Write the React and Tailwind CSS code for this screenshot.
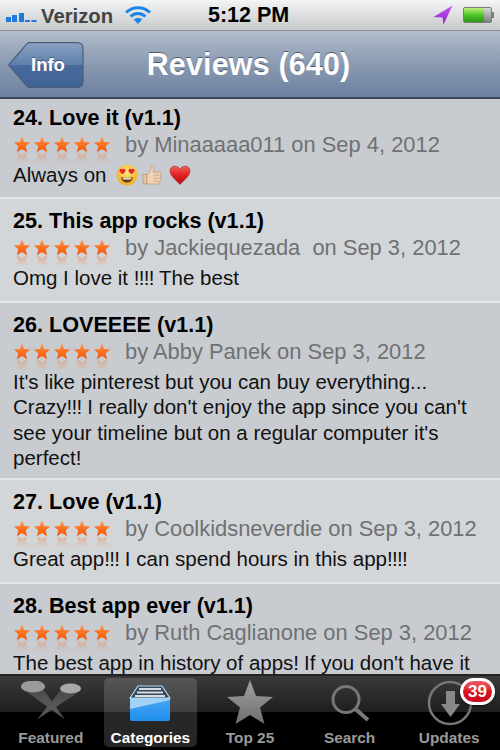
import React from 'react'

const reviews = [
  { title: '24. Love it (v1.1)', by: 'by Minaaaaa011 on Sep 4, 2012', body: ['Always on'], emoji: true, pad: 'pt-[5px] pb-[9.7px]' },
  { title: '25. This app rocks (v1.1)', by: 'by Jackiequezada  on Sep 3, 2012', body: ['Omg I love it !!!! The best'], pad: 'pt-[8px] pb-[10.7px]' },
  {
    title: '26. LOVEEEE (v1.1)',
    by: 'by Abby Panek on Sep 3, 2012',
    body: [
      "It's like pinterest but you can buy everything...",
      "Crazy!!! I really don't enjoy the app since you can't",
      "see your timeline but on a regular computer it's",
      'perfect!',
    ],
    pad: 'pt-[8px] pb-[7.8px]',
  },
  { title: '27. Love (v1.1)', by: 'by Coolkidsneverdie on Sep 3, 2012', body: ['Great app!!! I can spend hours in this app!!!!'], pad: 'pt-[8px] pb-[10.7px]' },
  { title: '28. Best app ever (v1.1)', by: 'by Ruth Caglianone on Sep 3, 2012', body: ["The best app in history of apps! If you don't have it"], pad: 'pt-[8px]' },
]

const STAR = 'M10 1 L12.6 7.4 L19.5 7.9 L14.2 12.3 L15.9 19 L10 15.4 L4.1 19 L5.8 12.3 L0.5 7.9 L7.4 7.4 Z'

function Star() {
  return (
    <svg width="20" height="28" viewBox="0 0 20 28" className="block">
      <defs>
        <linearGradient id="starFill" x1="0" y1="0" x2="0" y2="1">
          <stop offset="0" stopColor="#fb9a55" />
          <stop offset="0.55" stopColor="#f9701f" />
          <stop offset="1" stopColor="#f0560e" />
        </linearGradient>
        <linearGradient id="starGlow" x1="0" y1="0" x2="0" y2="1">
          <stop offset="0.3" stopColor="#ee8a55" stopOpacity="0" />
          <stop offset="1" stopColor="#ee8a55" stopOpacity="0.55" />
        </linearGradient>
      </defs>
      <path d={STAR} transform="translate(0.3 34) scale(0.88 -0.88)" fill="url(#starGlow)" />
      <path d={STAR} transform="translate(0.3 0.5) scale(0.88)" fill="url(#starFill)" />
    </svg>
  )
}

function Stars() {
  return (
    <div className="flex gap-[0.3px] h-[28px] w-[100px] shrink-0 mt-[4px]">
      {[1, 2, 3, 4, 5].map(i => <Star key={i} />)}
    </div>
  )
}

function Emojis() {
  return (
    <span className="inline-flex items-center ml-[10px]">
      {/* heart eyes */}
      <svg width="22" height="22" viewBox="0 0 22 22">
        <defs>
          <radialGradient id="face" cx="0.5" cy="0.35" r="0.7">
            <stop offset="0" stopColor="#ffe67a" />
            <stop offset="1" stopColor="#eda81c" />
          </radialGradient>
        </defs>
        <circle cx="11" cy="11" r="10.5" fill="url(#face)" />
        <path d="M6.5 5.5c-1-1.4-3.2-.6-3 1.2.1 1.4 1.7 2.4 3 3.4 1.3-1 2.9-2 3-3.4.2-1.8-2-2.6-3-1.2z" fill="#e3262b" />
        <path d="M15.5 5.5c-1-1.4-3.2-.6-3 1.2.1 1.4 1.7 2.4 3 3.4 1.3-1 2.9-2 3-3.4.2-1.8-2-2.6-3-1.2z" fill="#e3262b" />
        <path d="M5 13c3.5 1.2 8.5 1.2 12 0-.5 3.6-3 5.6-6 5.6S5.5 16.6 5 13z" fill="#6b3a10" />
        <path d="M6.5 13.8c3 .7 6 .7 9 0l-.4 1.4c-2.7.5-5.5.5-8.2 0z" fill="#fff" />
      </svg>
      {/* thumbs up */}
      <svg width="20" height="22" viewBox="0 0 20 22" className="ml-[4px]">
        <path d="M1 10.500h4v9.500H1z" fill="#e4c4a4" stroke="#b08a66" strokeWidth="0.6" />
        <path d="M5 10.500 C8 8.500 9 5.500 9 2.500 C9 .8 12 .8 12 3.500 C12 5.500 11.500 7 11 8 L17.500 8 C19.500 8 19.500 11 18 11.200 C19.500 11.800 19.500 14 18 14.200 C19 15 19 17 17.500 17.200 C18 18.500 17.500 20 16 20 L8 20 C6.500 20 5.500 19.500 5 19 Z" fill="#efd3b4" stroke="#b08a66" strokeWidth="0.6" />
        <path d="M11.500 11.200h6M11.500 14.200h6M11.500 17.200h5" stroke="#c49f7c" strokeWidth="0.7" />
      </svg>
      {/* heart */}
      <svg width="22" height="20" viewBox="0 0 22 20" className="ml-[7px]">
        <defs>
          <linearGradient id="heart" x1="0" y1="0" x2="0" y2="1">
            <stop offset="0" stopColor="#f0605c" />
            <stop offset="0.5" stopColor="#e0201f" />
            <stop offset="1" stopColor="#b70f10" />
          </linearGradient>
        </defs>
        <path d="M11 4C9 .2 1 -.2 1 6c0 5 6 9 10 13.500C15 15 21 11 21 6c0-6.200-8-5.800-10-2z" fill="url(#heart)" stroke="#8f1a1a" strokeWidth="0.5" />
      </svg>
    </span>
  )
}

// exclamation marks sit tighter in the original font
function BodyLine({ text }) {
  return text.split(/(!+)/).map((part, i) =>
    part.startsWith('!') ? <span key={i} className="tracking-[-0.7px]">{part}</span> : part
  )
}

function Review({ review, index }) {
  const even = index % 2 === 1
  return (
    <div className={`px-[13px] ${review.pad} ${even ? 'bg-[#d3d6d8]' : 'bg-[#c8ccd0]'} ${index > 0 ? 'border-t-2 border-[#e4e6e7]' : ''}`}>
      <div className="text-[21.6px] leading-[27px] font-bold text-black">{review.title}</div>
      <div className="flex h-[31px]">
        <Stars />
        <span className="ml-[12px] text-[21.9px] leading-[27px] text-[#6f7173] whitespace-pre">{review.by}</span>
      </div>
      <div className="text-[20.5px] text-[#111]">
        {review.body.map((line, i) => (
          <div key={i} className="whitespace-pre flex items-center h-[25.3px] leading-[25.3px]">
            <span><BodyLine text={line} /></span>
            {review.emoji && <Emojis />}
          </div>
        ))}
      </div>
    </div>
  )
}

function Tab({ label, active, children }) {
  return (
    <div className={`flex-1 h-[69px] mt-[2px] flex flex-col items-center rounded-[5px] ${active ? 'bg-white/15' : ''}`}>
      <div className="h-[51px] w-full flex items-center justify-center">{children}</div>
      <span className={`text-[15.4px] leading-[18px] font-bold ${active ? 'text-white' : 'text-[#9a9a9a]'}`}>{label}</span>
    </div>
  )
}

export default function App() {
  return (
    <div className="w-[500px] h-[750px] overflow-hidden flex flex-col font-['Liberation_Sans',Arial,sans-serif] bg-[#c8ccd0]">
      {/* Status bar */}
      <div className="relative h-[31px] shrink-0 flex items-center bg-gradient-to-b from-[#f4f5f5] to-[#c6c9cb] border-b border-[#8c8f92] pl-[6px] pr-[6px]">
        <svg width="31" height="14" viewBox="0 0 31 14" className="mt-[2px]">
          <rect x="0" y="8" width="5" height="5" fill="#1e7ae0" />
          <rect x="6" y="6" width="5" height="7" fill="#1e7ae0" />
          <rect x="13" y="4" width="5" height="9" fill="#1e7ae0" />
          <rect x="19" y="11" width="5" height="2" fill="#1e7ae0" />
          <rect x="25.500" y="11" width="5" height="2" fill="#1e7ae0" />
        </svg>
        <span className="ml-[4px] mt-[2px] text-[20.300px] font-bold leading-none text-[#444]">Verizon</span>
        <svg width="26" height="20" viewBox="0 0 26 20" className="ml-[12px]">
          <path d="M1 7.500C8 1 18 1 25 7.500" fill="none" stroke="#1c86e8" strokeWidth="3" />
          <path d="M5.500 11.500C10 7.500 16 7.500 20.500 11.500" fill="none" stroke="#1c86e8" strokeWidth="3" />
          <path d="M13 19l-4.200-4.500c2.500-2 5.900-2 8.400 0z" fill="#1c86e8" />
        </svg>
        <span className="absolute left-[208px] top-[2px] text-[21.500px] font-bold leading-[26px] text-black">5:12 PM</span>
        <div className="ml-auto flex items-center gap-[10px]">
          <svg width="20" height="20" viewBox="0 0 20 20">
            <defs>
              <linearGradient id="arrow" x1="0" y1="0" x2="0" y2="1">
                <stop offset="0" stopColor="#c05cf0" />
                <stop offset="1" stopColor="#8a1fd0" />
              </linearGradient>
            </defs>
            <path d="M19.500 0.500 L0.500 12 L9.500 12.500 L10.500 19.500 Z" fill="url(#arrow)" />
          </svg>
          <div className="flex items-center">
            <div className="w-[29px] h-[16px] border border-[#7b7d7f] rounded-[2px] bg-gradient-to-b from-[#d8d8d8] to-[#7f8082] overflow-hidden">
              <div className="w-[20px] h-full bg-gradient-to-b from-[#b6ef72] via-[#4fc42a] to-[#2a9a12]" />
            </div>
            <div className="w-[2px] h-[6px] bg-[#7b7d7f]" />
          </div>
        </div>
      </div>

      {/* Nav bar */}
      <div className="relative h-[68px] shrink-0 flex items-center justify-center pr-[3px] bg-gradient-to-b from-[#b3bdcb] via-[#8a9ab1] to-[#6c80a0] border-b-2 border-[#3d4753]">
        <svg width="76" height="46" viewBox="0 0 76 46" className="absolute left-[8px] top-[11px]">
          <defs>
            <linearGradient id="backBtn" x1="0" y1="0" x2="0" y2="1">
              <stop offset="0" stopColor="#8aa2c2" />
              <stop offset="0.5" stopColor="#5d7fa9" />
              <stop offset="0.5" stopColor="#476b9c" />
              <stop offset="1" stopColor="#3f6394" />
            </linearGradient>
          </defs>
          <path d="M0.700 23 L19 1.700 Q20 0.700 22 0.700 L69 0.700 Q75 0.700 75 6.700 L75 39.300 Q75 45.300 69 45.300 L22 45.300 Q20 45.300 19 44.300 Z" fill="url(#backBtn)" stroke="#4a5d78" strokeWidth="1.200" />
        </svg>
        <span className="absolute left-[31px] top-[22px] text-[18.500px] leading-[24px] font-bold text-white [text-shadow:0_-1px_0_rgba(40,50,70,0.6)]">Info</span>
        <span className="text-[30.500px] leading-none font-bold text-white tracking-[0.15px] [text-shadow:0_-1px_0_rgba(50,60,80,0.7)]">Reviews (640)</span>
      </div>

      {/* Review list */}
      <div className="flex-1 min-h-0 overflow-hidden">
        {reviews.map((r, i) => <Review key={i} review={r} index={i} />)}
      </div>

      {/* Tab bar */}
      <div className="relative h-[76px] shrink-0 flex gap-[6px] px-[4px] border-t-2 border-[#222] bg-[linear-gradient(to_bottom,#3a3a3a_0%,#1e1e1e_49%,#000_49%,#000_100%)]">
        <Tab label="Featured">
          <svg width="62" height="46" viewBox="0 0 62 46">
            <defs>
              <linearGradient id="beam" x1="0" y1="0" x2="0" y2="1">
                <stop offset="0" stopColor="#4a4a4a" />
                <stop offset="0.6" stopColor="#5a5a5a" />
                <stop offset="1" stopColor="#4e4e4e" />
              </linearGradient>
            </defs>
            <path d="M3 8 L23 8 L45 38.500 Z" fill="url(#beam)" />
            <path d="M40 10 L60 10 L17 38.500 Z" fill="url(#beam)" />
            <ellipse cx="13" cy="5.500" rx="12" ry="6" fill="#9a9a9a" />
            <ellipse cx="50.500" cy="7.500" rx="10.500" ry="5" fill="#a8a8a8" />
          </svg>
        </Tab>
        <Tab label="Categories" active>
          <svg width="42" height="37" viewBox="0 0 42 37">
            <defs>
              <linearGradient id="box" x1="0" y1="0" x2="0" y2="1">
                <stop offset="0" stopColor="#4aa6f2" />
                <stop offset="1" stopColor="#1f8fee" />
              </linearGradient>
            </defs>
            <path d="M9 1 L33 1 L41 13 L1 13 Z" fill="#34495e" stroke="#b8dbf6" strokeWidth="1.200" />
            <path d="M10 4 H32 M8 7.500 H34 M6 11 H36" stroke="#d8dce0" strokeWidth="2" />
            <path d="M1 13 L41 13 L41 34 Q41 36 39 36 L3 36 Q1 36 1 34 Z" fill="url(#box)" />
            <path d="M1 13 L41 13 L41 15 L1 24 Z" fill="#a3d2f7" />
          </svg>
        </Tab>
        <Tab label="Top 25">
          <svg width="46" height="44" viewBox="0 0 46 44" className="mb-[3px]">
            <defs>
              <linearGradient id="topStar" x1="0" y1="0" x2="0" y2="1">
                <stop offset="0" stopColor="#a0a0a0" />
                <stop offset="1" stopColor="#6e6e6e" />
              </linearGradient>
            </defs>
            <path d="M23 0 L29 16 L46 17 L33 27.500 L37.500 44 L23 35 L8.500 44 L13 27.500 L0 17 L17 16 Z" fill="url(#topStar)" />
          </svg>
        </Tab>
        <Tab label="Search">
          <svg width="40" height="40" viewBox="0 0 40 40" fill="none" stroke="#777">
            <circle cx="16" cy="15.500" r="13" strokeWidth="3" />
            <path d="M25.500 25 L38 36" strokeWidth="4" />
          </svg>
        </Tab>
        <Tab label="Updates">
          <svg width="46" height="46" viewBox="0 0 46 46" fill="none" className="ml-[2px] mb-[2px]">
            <circle cx="23" cy="23" r="21" stroke="#777" strokeWidth="2.500" />
            <path d="M19 11 H28 V24 H33 L23.500 37 L14 24 H19 Z" fill="#888" />
          </svg>
        </Tab>
        {/* Badge */}
        <div className="absolute right-[5px] top-[2px] h-[27px] w-[35px] rounded-full border-[3px] border-white bg-gradient-to-b from-[#ee5a60] via-[#dd1122] to-[#c80d1e] flex items-center justify-center text-[17px] font-bold text-white shadow-[0_1px_2px_rgba(0,0,0,0.6)]">39</div>
      </div>
    </div>
  )
}
